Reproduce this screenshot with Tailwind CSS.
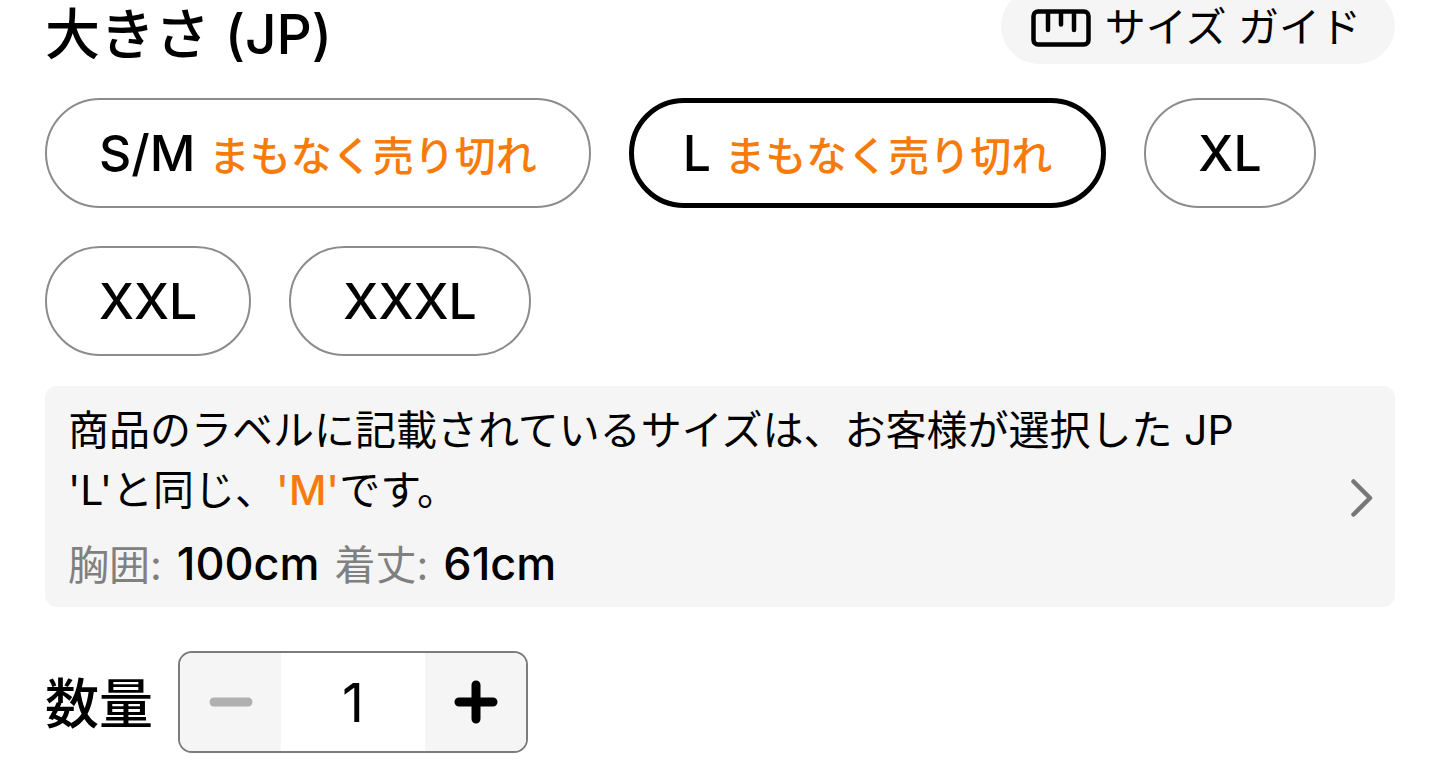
<!DOCTYPE html>
<html lang="ja">
<head>
  <meta charset="UTF-8" />
  <meta name="viewport" content="width=device-width, initial-scale=1.0" />
  <title>大きさ (JP)</title>
  <script src="https://cdn.jsdelivr.net/npm/@tailwindcss/browser@4"></script>
</head>
<body class="bg-white text-black overflow-hidden font-['Inter','Noto_Sans_CJK_JP',sans-serif]">

<main class="px-[45px]">

  <!-- Title and size guide -->
  <header class="-mt-3 flex justify-between items-start">
    <h1 class="pt-[10px] text-[55px] leading-[72px] font-medium">大きさ (JP)</h1>
    <button type="button" class="flex items-center gap-[14px] h-[76px] pt-[3px] pl-[30px] pr-[34px] rounded-full bg-[#f5f5f5] text-[41px]">
      <svg class="w-[60px] h-[38px]" viewBox="0 0 60 38" fill="none" stroke="currentColor" stroke-linecap="round">
        <rect x="2.5" y="2.5" width="55" height="33" rx="4.5" stroke-width="4.5"/>
        <path d="M17 4v17M30 4v11.5M43 4v17" stroke-width="4.5"/>
      </svg>
      <span>サイズ ガイド</span>
    </button>
  </header>

  <!-- Sizes -->
  <div id="sizes" class="mt-7 flex flex-wrap gap-[38px] text-[50px] font-medium">
    <button type="button" aria-pressed="false" class="h-[110px] px-[52px] rounded-full border-2 border-[#8c8c8c] aria-pressed:border-5 aria-pressed:border-black aria-pressed:px-[49px]">
      S/M <span class="text-[41px] text-[#f77b0b]">まもなく売り切れ</span>
    </button>
    <button type="button" aria-pressed="true" class="h-[110px] px-[52px] rounded-full border-2 border-[#8c8c8c] aria-pressed:border-5 aria-pressed:border-black aria-pressed:px-[49px]">
      L <span class="text-[41px] text-[#f77b0b]">まもなく売り切れ</span>
    </button>
    <button type="button" aria-pressed="false" class="h-[110px] px-[52px] rounded-full border-2 border-[#8c8c8c] aria-pressed:border-5 aria-pressed:border-black aria-pressed:px-[49px]">XL</button>
    <button type="button" aria-pressed="false" class="h-[110px] px-[52px] rounded-full border-2 border-[#8c8c8c] aria-pressed:border-5 aria-pressed:border-black aria-pressed:px-[49px]">XXL</button>
    <button type="button" aria-pressed="false" class="h-[110px] px-[52px] rounded-full border-2 border-[#8c8c8c] aria-pressed:border-5 aria-pressed:border-black aria-pressed:px-[49px]">XXXL</button>
  </div>

  <!-- Label info -->
  <a href="#" class="mt-[30px] flex items-center justify-between rounded-xl bg-[#f5f5f5] pl-[23px] pr-[22px] pt-[14px] pb-[12px] text-[41px]">
    <div>
      <p class="leading-[60px]">商品のラベルに記載されているサイズは、お客様が選択した JP<br>'L'と同じ、<span class="font-medium text-[#f77b0b]">'M'</span>です。</p>
      <p class="mt-[14px] flex items-baseline gap-[15px] leading-[60px] text-[#808080]">
        <span>胸囲:</span>
        <span class="text-[45px] font-medium text-black">100cm</span>
        <span>着丈:</span>
        <span class="text-[45px] font-medium text-black">61cm</span>
      </p>
    </div>
    <svg class="w-[22px] h-[40px] shrink-0" viewBox="0 0 22 40" fill="none" stroke="#777777" stroke-width="4.5" stroke-linecap="round" stroke-linejoin="round">
      <path d="M2.5 3.5L19 20L2.5 36.5"/>
    </svg>
  </a>

  <!-- Quantity -->
  <div class="mt-11 flex items-center gap-[25px]">
    <label for="qty" class="pt-1 text-[54px] font-medium">数量</label>
    <div class="flex h-[102px] w-[350px] overflow-hidden rounded-[14px] border-2 border-[#7c7c7c]">
      <button type="button" id="minus" aria-label="減らす" class="flex flex-1 items-center justify-center bg-[#f5f5f5] text-[#b0b0b0]">
        <svg class="w-[44px] h-[44px]" viewBox="0 0 44 44" fill="none" stroke="currentColor" stroke-width="9" stroke-linecap="round">
          <path d="M5 22h34"/>
        </svg>
      </button>
      <input id="qty" type="text" inputmode="numeric" value="1" class="w-[144px] bg-white text-center text-[54px] outline-none" />
      <button type="button" id="plus" aria-label="増やす" class="flex flex-1 items-center justify-center bg-[#f5f5f5]">
        <svg class="w-[44px] h-[44px]" viewBox="0 0 44 44" fill="none" stroke="currentColor" stroke-width="9" stroke-linecap="round">
          <path d="M5 22h34M22 5v34"/>
        </svg>
      </button>
    </div>
  </div>

</main>

<script>
  const sizes = document.querySelectorAll('#sizes button');
  const qty = document.getElementById('qty');

  sizes.forEach(btn => {
    btn.addEventListener('click', () => {
      sizes.forEach(b => b.setAttribute('aria-pressed', b === btn));
    });
  });

  function changeQty(step) {
    qty.value = Math.max(1, (parseInt(qty.value) || 1) + step);
  }

  document.getElementById('minus').addEventListener('click', () => changeQty(-1));
  document.getElementById('plus').addEventListener('click', () => changeQty(1));
</script>
</body>
</html>
